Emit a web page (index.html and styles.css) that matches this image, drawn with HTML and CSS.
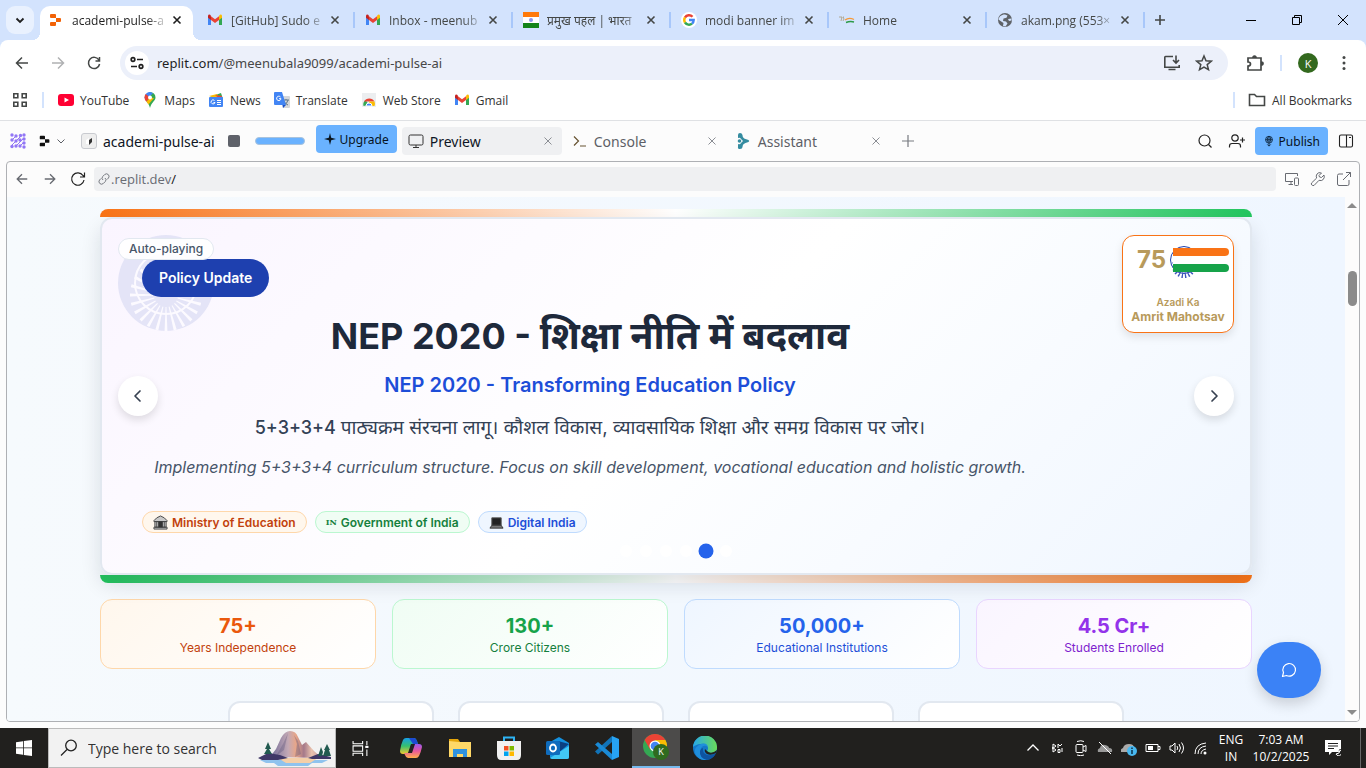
FILE: index.html
```html
<!DOCTYPE html>
<html lang="en">
<head>
<meta charset="utf-8">
<title>academi-pulse-ai</title>
<link rel="stylesheet" href="styles.css">
</head>
<body>
<svg class="defs" aria-hidden="true">
  <symbol id="x" viewBox="0 0 16 16"><path d="M4.500 4.500l7 7m0-7l-7 7" stroke="currentColor" stroke-width="1.600"/></symbol>
  <symbol id="xs" viewBox="0 0 16 16"><path d="M4.500 4.500l7 7m0-7l-7 7" stroke="currentColor" stroke-width="1"/></symbol>
  <symbol id="gmail" viewBox="0 0 16 16"><path d="M1 4v9h3V7z" fill="#4285f4"/><path d="M12 7v6h3V4z" fill="#34a853"/><path d="M12 4.500V8l3-2.300V4c0-1.500-1.500-2-2.500-1z" fill="#fbbc04"/><path d="M4 4.500V8L1 5.700V4c0-1.500 1.500-2 2.500-1z" fill="#c5221f"/><path d="M4 4.200l4 3 4-3V8l-4 3-4-3z" fill="#ea4335"/></symbol>
  <symbol id="replit" viewBox="0 0 16 16"><path d="M3 2h4q1 0 1 1v3H3q-1 0-1-1V3q0-1 1-1zM8 6h4q1 0 1 1v2q0 1-1 1H8zM3 10h5v3q0 1-1 1H3q-1 0-1-1v-2q0-1 1-1z" fill="currentColor"/></symbol>
  <symbol id="back" viewBox="0 0 16 16"><path d="M14 8H3m5-5.500L2.500 8 8 13.500" fill="none" stroke="currentColor" stroke-width="1.500"/></symbol>
  <symbol id="fwd" viewBox="0 0 16 16"><path d="M2 8h11M8 2.500L13.500 8 8 13.500" fill="none" stroke="currentColor" stroke-width="1.500"/></symbol>
  <symbol id="reload" viewBox="0 0 16 16"><path d="M13 5.200A5.600 5.600 0 1 0 13.600 9M13.500 2v4H9.500" fill="none" stroke="currentColor" stroke-width="1.500"/></symbol>
</svg>

<header class="tabstrip">
  <button class="tab-search" aria-label="Search tabs"><svg viewBox="0 0 16 16"><path d="M4.500 6.500L8 10l3.500-3.500" fill="none" stroke="#1f1f1f" stroke-width="1.800"/></svg></button>
  <nav class="tabs">
    <div class="tab active"><svg class="brand"><use href="#replit"/></svg><span>academi-pulse-a</span><button aria-label="Close"><svg><use href="#x"/></svg></button></div>
    <div class="tab"><svg><use href="#gmail"/></svg><span>[GitHub] Sudo e</span><button aria-label="Close"><svg><use href="#x"/></svg></button></div>
    <div class="tab"><svg><use href="#gmail"/></svg><span>Inbox - meenub</span><button aria-label="Close"><svg><use href="#x"/></svg></button></div>
    <div class="tab"><svg viewBox="0 0 16 16"><path fill="#ff7a0a" d="M0 0h16v5H0z"/><path fill="#fff" d="M0 5h16v6H0z"/><path fill="#14841a" d="M0 11h16v5H0z"/><circle cx="8" cy="8" r="2" fill="#8d94e8"/></svg><span>प्रमुख पहल | भारत</span><button aria-label="Close"><svg><use href="#x"/></svg></button></div>
    <div class="tab"><svg viewBox="0 0 16 16"><circle cx="8" cy="8" r="8" fill="#fff"/><g fill="none" stroke-width="2.400"><path d="M11.500 4.800A4.700 4.700 0 0 0 4 5.500" stroke="#ea4335"/><path d="M4 5.500A4.700 4.700 0 0 0 4 10.500" stroke="#fbbc04"/><path d="M4 10.500A4.700 4.700 0 0 0 11 11.600" stroke="#34a853"/><path d="M11 11.600A4.700 4.700 0 0 0 12.700 8H8" stroke="#4285f4"/></g></svg><span>modi banner im</span><button aria-label="Close"><svg><use href="#x"/></svg></button></div>
    <div class="tab"><svg viewBox="0 0 16 16" fill="none"><path d="M0 5h3L2 9m3-4H4l1 2-1 2" stroke="#a89a78" stroke-width=".8"/><path d="M6 8q4-3 9-.5" stroke="#f59a3a" stroke-width="1.300"/><path d="M7 10.500q4-1.500 8-.5" stroke="#2c9a48" stroke-width="1.500"/></svg><span>Home</span><button aria-label="Close"><svg><use href="#x"/></svg></button></div>
    <div class="tab"><svg viewBox="0 0 16 16"><circle cx="8" cy="8" r="7" fill="#5f6368"/><path d="M8 2.500l2.500 1-1 2.200-3 .8L6 9l3 .5 1.500 2-2 3L6 14l.5-3L3.500 9 1.500 7.500C2 5 4 2.500 8 2.500zM11 7l3.500-.5v2L12 9z" fill="#d3e3fd"/></svg><span>akam.png (553×</span><button aria-label="Close"><svg><use href="#x"/></svg></button></div>
  </nav>
  <button class="new-tab" aria-label="New tab"><svg viewBox="0 0 16 16"><path d="M8 3v10M3 8h10" stroke="#444746" stroke-width="1.600"/></svg></button>
  <div class="win">
    <button aria-label="Minimize"><svg viewBox="0 0 12 12"><path d="M1 6.500h10" stroke="#000"/></svg></button>
    <button aria-label="Restore"><svg viewBox="0 0 12 12" fill="none" stroke="#000"><path d="M1.500 3.500h7v7h-7zM3.500 3.500v-2h7v7h-2"/></svg></button>
    <button aria-label="Close"><svg viewBox="0 0 12 12"><path d="M1 1l10 10M11 1L1 11" stroke="#000"/></svg></button>
  </div>
</header>

<div class="chrome">
  <div class="toolbar">
    <button aria-label="Back"><svg><use href="#back"/></svg></button>
    <button aria-label="Forward" class="dim"><svg><use href="#fwd"/></svg></button>
    <button aria-label="Reload"><svg><use href="#reload"/></svg></button>
    <div class="omnibox">
      <button class="site" aria-label="Site information"><svg viewBox="0 0 16 16" fill="none" stroke="#1f1f1f" stroke-width="1.700"><circle cx="4" cy="4.500" r="1.800"/><path d="M8 4.500h6M2 11.500h6"/><circle cx="12" cy="11.500" r="1.800"/></svg></button>
      <div class="url"><b>replit.com</b>/@meenubala9099/academi-pulse-ai</div>
      <button aria-label="Install"><svg viewBox="0 0 18 18" fill="none" stroke="#444746" stroke-width="1.600"><path d="M10 2.500H2.500q-.7 0-.7.700v10h14.400V11M5.500 15.500h7M13 1.500v7M10 6l3 3 3-3"/></svg></button>
      <button aria-label="Bookmark"><svg viewBox="0 0 18 18" fill="none" stroke="#444746" stroke-width="1.500"><path d="M9 2l2 4.800 5.200.4-4 3.400 1.300 5.100L9 13l-4.500 2.700 1.300-5.100-4-3.400L7 6.800z"/></svg></button>
    </div>
    <button aria-label="Extensions" class="ext"><svg viewBox="0 0 18 18" fill="none" stroke="#444746" stroke-width="1.700"><path d="M2 4h13v12H2v-4q2.500 0 2.500-2T2 8z"/><path d="M7 4q0-2 1.500-2T10 4M15 8q2 0 2 1.500T15 11" fill="#444746"/></svg></button>
    <i class="vsep"></i>
    <button class="avatar">K</button>
    <button aria-label="Menu" class="more"><svg viewBox="0 0 16 16" fill="#444746"><circle cx="8" cy="2.500" r="1.500"/><circle cx="8" cy="8" r="1.500"/><circle cx="8" cy="13.500" r="1.500"/></svg></button>
  </div>
  <nav class="bookmarks">
    <button aria-label="Apps"><svg viewBox="0 0 16 16" fill="none" stroke="#444746" stroke-width="1.600"><path d="M1.800 1.800h4v4h-4zM10.200 1.800h4v4h-4zM1.800 10.200h4v4h-4zM10.200 10.200h4v4h-4z"/></svg></button>
    <i class="vsep first"></i>
    <a href="#"><svg viewBox="0 0 16 16"><rect y="2" width="16" height="12" rx="3" fill="#ff0033"/><path d="M6.500 5.500v5L11 8z" fill="#fff"/></svg>YouTube</a>
    <a href="#"><svg viewBox="0 0 16 16"><path d="M8 0a5.500 5.500 0 0 1 5.500 5.500C13.500 9 9.500 10 8 16c-.7-3-2-4.600-3.500-6.500z" fill="#34a853"/><path d="M3.500 8.500L11 1.200A5.500 5.500 0 0 0 3.700 2L2.500 5.500z" fill="#4285f4"/><path d="M3.700 2L8 5.500 4.500 9.800Q2.500 8 2.500 5.500T3.700 2z" fill="#ea4335"/><path d="M8 5.500L4.500 9.800l2 2.700L12 6z" fill="#fbbc04"/><circle cx="8" cy="5.500" r="2" fill="#fff"/></svg>Maps</a>
    <a href="#"><svg viewBox="0 0 16 16"><path d="M2 5L13 1l2 6z" fill="#34a853"/><path d="M1 4l8-2 2 5z" fill="#fbbc04"/><path d="M7 3l7 1-1 4z" fill="#ea4335"/><rect x="1" y="5" width="14" height="10" rx="1" fill="#4285f4"/><path d="M6.500 8.500A2 2 0 1 0 7 10.500H5.500M9 8.500h4M9 10.500h4M9 12.500h4" stroke="#fff" fill="none"/></svg>News</a>
    <a href="#"><svg viewBox="0 0 16 16"><path d="M6 4h9q1 0 1 1v10q0 1-1 1H9z" fill="#d5d7da"/><path d="M9 8h6M12 7v1m2 0q-1 4-4 5m0-4q1 3 4 4" stroke="#5f7686" fill="none"/><path d="M1 0h7l4 13H1q-1 0-1-1V1q0-1 1-1z" fill="#4285f4"/><path d="M8.500 13H12l-3 3z" fill="#1a4fc4"/><path d="M6.500 5A2.200 2.200 0 1 0 7 6.700H5" stroke="#fff" fill="none"/></svg>Translate</a>
    <a href="#"><svg viewBox="0 0 16 16"><path d="M1 1h14v14H1z" fill="#eceef0"/><path d="M2.500 14a5.700 5.700 0 0 1 2-6L8 13z" fill="#34a853"/><path d="M3 9.500a6 6 0 0 1 10.500 0z" fill="#ea4335"/><path d="M13.500 14a6 6 0 0 0 0-4.500H8V14z" fill="#fbbc04"/><path d="M5 14a3 3 0 0 1 6 0z" fill="#4285f4" stroke="#fff"/></svg>Web Store</a>
    <a href="#"><svg><use href="#gmail"/></svg>Gmail</a>
    <i class="vsep push"></i>
    <a href="#" class="all"><svg viewBox="0 0 18 16" fill="none" stroke="#444746" stroke-width="1.600"><path d="M1.500 2.500h5l2 2h8v9h-15z"/></svg>All Bookmarks</a>
  </nav>
</div>

<div class="ide">
  <div class="ide-bar">
    <svg class="dots" viewBox="0 0 16 16" fill="#9277f5" stroke="#9277f5"><path d="M2 7l4-4M2 12L11 3M6 13l7-7M10 13l3-3" stroke-width="1"/><g stroke="none"><circle cx="2" cy="2" r="1.700"/><circle cx="6" cy="3" r="1.700"/><circle cx="10.500" cy="2.500" r="1.700"/><circle cx="14" cy="2" r="1.700"/><circle cx="2" cy="7" r="1.700"/><circle cx="6" cy="8" r="1.700"/><circle cx="10" cy="7" r="1.700"/><circle cx="14" cy="6" r="1.700"/><circle cx="2" cy="13.500" r="1.700"/><circle cx="6" cy="13" r="1.700"/><circle cx="10" cy="13" r="1.700"/><circle cx="14" cy="10" r="1.700"/><circle cx="14" cy="14" r="1.700"/></g></svg>
    <button class="logo" aria-label="Replit menu"><svg><use href="#replit"/></svg><svg class="chev" viewBox="0 0 10 10"><path d="M1.500 3.500L5 7l3.500-3.500" fill="none" stroke="#5c5f66"/></svg></button>
    <div class="app"><svg viewBox="0 0 16 16"><rect x=".5" y=".5" width="15" height="15" rx="2.500" fill="#eee" stroke="#c9cbd0"/><path d="M5 7l3-2v6H5z" fill="#fff"/><path d="M8 7l3-2v4l-3 3z" fill="#333"/></svg><span>academi-pulse-ai</span></div>
    <button class="stop" aria-label="Stop"></button>
    <div class="usage"></div>
    <button class="blue upgrade"><svg viewBox="0 0 14 14"><path d="M7 0l1.400 5.600L14 7 8.400 8.400 7 14 5.600 8.400 0 7l5.600-1.400z" fill="#0a1520"/></svg>Upgrade</button>
    <nav class="panes">
      <div class="pane on"><svg viewBox="0 0 16 16" fill="none" stroke="#333"><rect x="1" y="2" width="14" height="10" rx="1.500"/><path d="M8 12v2.500M5 14.500h6"/></svg><span>Preview</span><button aria-label="Close"><svg><use href="#xs"/></svg></button></div>
      <div class="pane"><svg viewBox="0 0 16 16" fill="none" stroke="#665230" stroke-width="1.200"><path d="M2 3.500L6.500 8 2 12.500M8 13h6"/></svg><span>Console</span><button aria-label="Close"><svg><use href="#xs"/></svg></button></div>
      <div class="pane"><svg viewBox="0 0 16 16" fill="#358ca0"><path d="M2 2q0-2 2-2t2.500 2q0 3 3 4l3 1q1.500 1 0 2l-3 1q-3 1-3 4 0 2-2.500 2t-2-2v-3q2 1 3-1l2-2-2-2q-1-2-3-1z"/><circle cx="3.500" cy="8" r="1.800"/></svg><span>Assistant</span><button aria-label="Close"><svg><use href="#xs"/></svg></button></div>
    </nav>
    <button class="add" aria-label="Add pane"><svg viewBox="0 0 14 14"><path d="M7 1v12M1 7h12" stroke="#777a80" stroke-width="1.200"/></svg></button>
    <div class="ide-right">
      <button aria-label="Search"><svg viewBox="0 0 16 16" fill="none" stroke="#222" stroke-width="1.200"><circle cx="7.500" cy="7.500" r="5.500"/><path d="M11.500 11.500l3 3"/></svg></button>
      <button aria-label="Invite"><svg viewBox="0 0 18 16" fill="none" stroke="#222" stroke-width="1.200"><circle cx="7" cy="5" r="3.200"/><path d="M1.500 14.500V13q0-2.500 2.500-2.500h6q2.500 0 2.500 2.500v1.500M14.500 4.500v5M12 7h5"/></svg></button>
      <button class="blue"><svg viewBox="0 0 14 14" fill="none" stroke="#0a2238"><circle cx="7" cy="5.500" r="4"/><path d="M3 5.500h8M7 1.500v11M5 5.500q0-3 2-4 2 1 2 4l-1 3M5 5.500l1 3M5 11l2 2 2-2"/></svg>Publish</button>
      <button aria-label="Sidebar"><svg viewBox="0 0 16 16" fill="none" stroke="#222" stroke-width="1.100"><rect x="1.500" y="2" width="13" height="12" rx="1.500"/><path d="M8.500 2v12M11 4.500h2"/></svg></button>
    </div>
  </div>

  <section class="frame">
    <div class="view-bar">
      <button aria-label="Back"><svg><use href="#back"/></svg></button>
      <button aria-label="Forward"><svg><use href="#fwd"/></svg></button>
      <button aria-label="Reload" class="dark"><svg viewBox="0 0 16 16" fill="none" stroke="currentColor" stroke-width="1.200"><path d="M14 9A6.200 6.200 0 1 1 13 4.500L14.500 6M14.500 1.500V6H10"/></svg></button>
      <div class="view-url"><svg viewBox="0 0 14 14" fill="none" stroke="#777a80"><path d="M6 8q-2-1.500-.3-3.500l2-2q1.800-1.500 3.500 0t.3 3.500L10 7.500M8 6q2 1.500.3 3.500l-2 2q-1.800 1.500-3.500 0t-.3-3.500L4 6.500"/></svg><span>.replit.dev<b>/</b></span></div>
      <div class="view-right">
        <button aria-label="Devices"><svg viewBox="0 0 16 16" fill="none" stroke="currentColor"><path d="M9 10.500H1.500v-8h12V5M7 10.500v3M4.500 13.500H9"/><rect x="10.500" y="7" width="4" height="7.500" rx="1"/></svg></button>
        <button aria-label="Tools"><svg viewBox="0 0 16 16" fill="none" stroke="currentColor"><path d="M14 4l-2.500 2.500L9.500 6 9 4.500 11.500 2Q8.500.8 7 3t-.3 4L1.500 12q-.5 1.200.3 2t2.200.5l5-5.200q2.500 1 4.200-.8T14 4z"/></svg></button>
        <button aria-label="Open in new tab"><svg viewBox="0 0 16 16" fill="none" stroke="currentColor"><path d="M7 3H3Q1.500 3 1.500 4.500V13q0 1.500 1.500 1.500h8.500q1.500 0 1.500-1.500V9M10 1.500h4.500V6M14.500 1.500L7 9"/></svg></button>
      </div>
    </div>
    <div class="stage">
      <main class="page">
        <div class="wrap">
          <section class="hero">
            <div class="band top"></div>
            <div class="card">
              <svg class="chakra" viewBox="0 0 96 96"><circle cx="48" cy="48" r="48" fill="#e4e4f7"/><circle cx="48" cy="48" r="31" fill="none" stroke="#fcfaff" stroke-width="2"/><circle cx="48" cy="60" r="24" fill="none" stroke="#fcfaff" stroke-width="24" stroke-dasharray="2 4.283" stroke-dashoffset="1" pathLength="150.800"/></svg>
              <div class="body">
                <span class="kind">Policy Update</span>
                <h1>NEP 2020 - <span lang="hi">शिक्षा नीति में बदलाव</span></h1>
                <h2>NEP 2020 - Transforming Education Policy</h2>
                <p class="hi">5+3+3+4 <span lang="hi">पाठ्यक्रम संरचना लागू। कौशल विकास, व्यावसायिक शिक्षा और समग्र विकास पर जोर।</span></p>
                <p class="en">Implementing 5+3+3+4 curriculum structure. Focus on skill development, vocational education and holistic growth.</p>
                <div class="tags">
                  <span class="tag orange"><svg viewBox="0 0 16 16"><path d="M1 6l3-3 4-2 4 2 3 3v1H1zM2 7h12v6H2zM1 13h14v2H1z" fill="#c8c8c8" stroke="#444"/><path d="M4 7v6M6 7v6M10 7v6M12 7v6" stroke="#444"/><path d="M6 7h4v6H6z" fill="#333"/></svg>Ministry of Education</span>
                  <span class="tag green"><b>IN</b>Government of India</span>
                  <span class="tag sky"><svg viewBox="0 0 16 16"><path d="M3 3h10v8H3z" fill="#222" stroke="#555"/><path d="M3 11h10l2 3H1z" fill="#777" stroke="#333"/></svg>Digital India</span>
                </div>
              </div>
              <span class="auto">Auto-playing</span>
              <div class="azadi">
                <div class="mark"><span>75</span><svg viewBox="0 0 60 34"><circle cx="15" cy="16" r="13.500" fill="none" stroke="#1e40af" stroke-width="1"/><circle cx="15" cy="22" r="7.500" fill="none" stroke="#3c55bb" stroke-width="9" stroke-dasharray="1 1.500"/><path d="M4 12h56v8H4z" fill="#fff"/><path d="M4 4h52q4 0 4 4t-4 4H4z" fill="#f97316"/><path d="M4 20h52q4 0 4 4t-4 4H4z" fill="#16a34a"/></svg></div>
                <small>Azadi Ka</small>
                <strong>Amrit Mahotsav</strong>
              </div>
              <button class="arrow prev" aria-label="Previous"><svg viewBox="0 0 20 20"><path d="M12 5l-5 5 5 5" fill="none" stroke="#374151" stroke-width="1.700" stroke-linecap="round" stroke-linejoin="round"/></svg></button>
              <button class="arrow next" aria-label="Next"><svg viewBox="0 0 20 20"><path d="M8 5l5 5-5 5" fill="none" stroke="#374151" stroke-width="1.700" stroke-linecap="round" stroke-linejoin="round"/></svg></button>
              <div class="pager"><button aria-label="Slide 1"></button><button aria-label="Slide 2"></button><button aria-label="Slide 3"></button><button aria-label="Slide 4"></button><button aria-label="Slide 5" class="cur"></button><button aria-label="Slide 6"></button></div>
            </div>
            <div class="band bottom"></div>
          </section>
          <section class="stats">
            <div class="stat s1"><strong>75+</strong><span>Years Independence</span></div>
            <div class="stat s2"><strong>130+</strong><span>Crore Citizens</span></div>
            <div class="stat s3"><strong>50,000+</strong><span>Educational Institutions</span></div>
            <div class="stat s4"><strong>4.5 Cr+</strong><span>Students Enrolled</span></div>
          </section>
          <section class="tiles"><div></div><div></div><div></div><div></div></section>
        </div>
      </main>
      <div class="scroll"><i class="up"></i><i class="thumb"></i><i class="down"></i></div>
      <button class="chat" aria-label="Chat"><svg viewBox="0 0 16 16" fill="none" stroke="#fff" stroke-width="1.200"><path d="M1.500 14.500l1-4A6.300 6.300 0 1 1 5.500 13.500z" stroke-linejoin="round"/></svg></button>
    </div>
  </section>
</div>

<footer class="taskbar">
  <button class="start" aria-label="Start"><svg viewBox="0 0 16 16" fill="#fff"><path d="M0 2.200L7 1.200v6.300H0zM7.800 1.100L16 0v7.500H7.800zM0 8.300h7v6.500l-7-1zM7.800 8.300H16V16l-8.200-1.100z"/></svg></button>
  <label class="search">
    <svg class="glass" viewBox="0 0 18 18" fill="none" stroke="#222" stroke-width="1.300"><circle cx="11" cy="6.500" r="5.300"/><path d="M7 10.500l-6 6"/></svg>
    <input type="text" placeholder="Type here to search" aria-label="Type here to search">
    <svg class="scene" viewBox="0 0 74 36"><defs><linearGradient id="rock" x1="0" x2="1"><stop offset="0" stop-color="#6f6a98"/><stop offset=".35" stop-color="#c3a9b5"/><stop offset=".5" stop-color="#e8a688"/><stop offset=".65" stop-color="#a5798a"/><stop offset=".8" stop-color="#e9c2ae"/><stop offset="1" stop-color="#c49aa0"/></linearGradient></defs><path d="M2 30h68l-6 3H54l-4 3H20l-4-3H8z" fill="#8fc3ee"/><path d="M20 28h40l-8 5H28z" fill="#f4cfa8"/><path d="M12 27l6-8 5-11Q27 1 32 1q6 0 8 6l4 8 4-3 8 9 8 7z" fill="url(#rock)"/><path d="M30 3l-5 11-7 12 8-6zM36 5l3 9-2 13 6-3-3-13z" fill="#5c5479" opacity=".35"/><path d="M0 28l10-5 12 2 8 3-10 2H4zM50 28l10-4 13 3v2H54z" fill="#3f3767"/><path d="M10 12l3 7h-2l3 5H6l3-5H7zM63 17l2 5-1 4h-4zM69 14l3 6h-1l2 6h-8l2-6h-1z" fill="#225a50"/></svg>
  </label>
  <div class="apps">
    <button aria-label="Task view" class="view"><svg class="sm" viewBox="0 0 16 16" fill="none" stroke="#fff"><path d="M1 1v2.500h9V1M1 5.500h9v5H1zM1 15v-2.500h9V15M14 1v4M14 9v6"/><path d="M12.500 5.500h3v2h-3z" fill="#fff" stroke="none"/></svg></button>
    <button aria-label="Copilot"><svg viewBox="0 0 24 24"><defs><linearGradient id="c1" x1="0" y1="0" x2="0" y2="1"><stop offset="0" stop-color="#179fe8"/><stop offset=".5" stop-color="#35c06f"/><stop offset="1" stop-color="#f2ca30"/></linearGradient><linearGradient id="c2" x1="0" y1="0" x2="0" y2="1"><stop offset="0" stop-color="#9a5af0"/><stop offset=".5" stop-color="#e7579b"/><stop offset="1" stop-color="#ffb04a"/></linearGradient></defs><path d="M7 2h8q2 0 3 3l1 3h-4l-3 1-2 7q-1 2-3 2H4q-3 0-3-3Q2 8 4 4q1-2 3-2z" fill="url(#c1)"/><path d="M10 2h5q2 0 3 3l1 3h-5z" fill="#1c4bd2"/><path d="M17 22H9q-2 0-3-3l-1-2h3q3 0 4-3l2-6h6q3 0 3 3-1 5-3 9-1 2-3 2z" fill="url(#c2)"/><path d="M12 8h4l-3 9h-4z" fill="#222"/></svg></button>
    <button aria-label="File Explorer"><svg viewBox="0 0 24 24"><path d="M1 3h9l2 3h11v15H1z" fill="#e5a50a"/><path d="M1 5l10 1h12v15H1z" fill="#ffd867"/><path d="M5 13h14v8h-4v-3H9v3H5z" fill="#2f92de"/></svg></button>
    <button aria-label="Store"><svg viewBox="0 0 24 24"><path d="M7 6V1.500h10V6" fill="none" stroke="#2eb3f4" stroke-width="2"/><path d="M0 5h24v14q0 5-4 5H4q-4 0-4-5z" fill="#f1f1f1"/><path d="M7 10h4.500v4.500H7z" fill="#f25022"/><path d="M12.500 10H17v4.500h-4.500z" fill="#7fba00"/><path d="M7 15.500h4.500V20H7z" fill="#00a4ef"/><path d="M12.500 15.500H17V20h-4.500z" fill="#ffb900"/></svg></button>
    <button aria-label="Outlook"><svg viewBox="0 0 24 24"><path d="M4 6l9-5 10 6v14q0 2-2 2H6q-2 0-2-2z" fill="#1490df"/><path d="M12 5l11 3-11 9z" fill="#0c3f80"/><path d="M4 22L23 10v11q0 2-2 2H6z" fill="#42c8f5"/><rect y="5" width="14" height="14" rx="1.500" fill="#0f6cbd"/><ellipse cx="7" cy="12" rx="3" ry="3.500" fill="none" stroke="#fff" stroke-width="1.800"/></svg></button>
    <button aria-label="Visual Studio Code"><svg viewBox="0 0 24 24"><path d="M0 15.500L17 0v6L3 18.500z" fill="#1173b8"/><path d="M0 8.500L3 6l14 12v6z" fill="#1a8ad6"/><path d="M17 0l7 3v18l-7 3z" fill="#27a3f3"/></svg></button>
    <button aria-label="Chrome" class="open"><svg viewBox="0 0 26 26"><circle cx="12" cy="12" r="12" fill="#34a853"/><path d="M1.600 6a12 12 0 0 1 20.800 0H12l-5.200 9z" fill="#ea4335"/><path d="M22.400 6A12 12 0 0 1 12 24l5.200-9L12 6z" fill="#fbbc04"/><circle cx="12" cy="12" r="5.500" fill="#fff"/><circle cx="12" cy="12" r="4.300" fill="#4285f4"/><circle cx="18" cy="18" r="8" fill="#2f6b1f"/><text x="18" y="21" font-size="9" text-anchor="middle" fill="#fff" font-family="Open Sans, sans-serif">K</text></svg></button>
    <button aria-label="Edge"><svg viewBox="0 0 24 24"><defs><linearGradient id="e1"><stop offset="0" stop-color="#26a8ea"/><stop offset="1" stop-color="#6adb58"/></linearGradient></defs><circle cx="12" cy="12" r="12" fill="#1478c8"/><path d="M0 11A12 12 0 0 1 24 12c0 6-9 6-10 3 3-4-1-8-6-7-4 0-7 2-8 3z" fill="url(#e1)"/><path d="M8 12q-3 9 7 12-8 1-12-5-4-7 5-11 6-2 7 3-4-3-7 1z" fill="#1f8edc"/><path d="M10 12q-1 5 4 7 5 1 9-2-3 6-9 7-8-2-7-9 1-3 3-3z" fill="#0e53a0"/><path d="M14 15q4 4 10-1l-1 3q-5 3-9 1-3-2-2-5z" fill="#222"/></svg></button>
  </div>
  <div class="tray">
    <svg viewBox="0 0 16 16"><path d="M2.500 10.500L8 5l5.500 5.500" stroke-width="1.300"/></svg>
    <svg viewBox="0 0 16 16"><path d="M4 4v8M4 4l3 2-4 3M3 7l4 3-3 2M9 8V4l2 2 2-2M9 9.500h2v3H9zM13 8v4"/></svg>
    <svg viewBox="0 0 16 16"><rect x="3" y="4.500" width="7" height="8" rx="1"/><path d="M10 7l3-1.500v6L10 10M4 1.500q4-1.500 7 0M4 15q4 1.500 7 0"/></svg>
    <svg viewBox="0 0 16 16"><path d="M1 12q-1-3 2-4 1-4 5-3t4 3q4 0 3 4z" fill="#999" stroke="none"/><path d="M2 2l12 12"/></svg>
    <svg viewBox="0 0 16 16"><path d="M0 12q-1-3 2-4 1-4 6-4t5 4v4z" fill="#aaa" stroke="none"/><circle cx="11" cy="11" r="5" fill="#48b8f0" stroke="none"/><path d="M11 7.500V9m0 1v4" stroke="#08304a" stroke-width="1.500"/></svg>
    <svg viewBox="0 0 16 16"><path d="M1 4.500h12v7H1zM13 6.500h2v3h-2"/><path d="M3 6h5v4H3z" fill="#fff" stroke="none"/></svg>
    <svg viewBox="0 0 16 16"><path d="M1 6v4h2l3 3V3L3 6zM8 6q1.500 2 0 4M10 4q3 4 0 8M12.500 2.500q4 5.500 0 11"/></svg>
    <svg viewBox="0 0 16 16"><path d="M2 14Q2 4 13 3M5 14Q5 7 13 6M8 14Q8 10 13 9"/><circle cx="12" cy="13" r="1.500" fill="#fff" stroke="none"/></svg>
    <div class="lang">ENG<br>IN</div>
    <div class="clock">7:03 AM<br>10/2/2025</div>
    <button class="note" aria-label="Notifications"><svg viewBox="0 0 16 16"><path d="M0 0h16v9q-3 0-2 3H7l-3 3v-3H0z" fill="#fff" stroke="none"/><path d="M3 3.500h10M3 6h10M3 8.500h6" stroke="#222"/><path d="M15 10a3 3 0 1 1-4 4q4 0 4-4z" fill="#222"/></svg></button>
  </div>
</footer>
</body>
</html>
```
FILE: styles.css
```css
* { box-sizing: border-box; }
body { margin: 0; height: 100vh; overflow: hidden; display: flex; flex-direction: column; font-family: "Open Sans", "Noto Sans", sans-serif; font-size: 12px; color: #333; background: #fcfcfc; }
button { border: 0; padding: 0; background: none; font: inherit; color: inherit; display: flex; align-items: center; justify-content: center; flex: none; }
a { color: inherit; text-decoration: none; }
svg { display: block; flex: none; width: 16px; height: 16px; }
.defs { position: absolute; width: 0; height: 0; }
.vsep { width: 2px; height: 16px; background: #d3e3fd; flex: none; }

/* Browser tabs */
.tabstrip { height: 40px; flex: none; display: flex; align-items: center; background: #d3e3fd; color: #444746; }
.tab-search { width: 28px; height: 28px; margin: 0 3px 0 6px; border-radius: 9px; background: #e9f1fe; }
.tabs { display: flex; align-self: stretch; }
.tab { width: 158px; display: flex; align-items: center; padding: 0 10px 0 12px; position: relative; }
.tab span { flex: 1; min-width: 0; margin: 0 4px 0 8px; overflow: hidden; white-space: nowrap; mask-image: linear-gradient(90deg, #000 80%, transparent 105%); }
.tab:nth-child(n+3)::before, .new-tab::before { content: ""; width: 2px; height: 16px; margin: 0 10px 0 -12px; background: #a8c7fa; }
.tab.active { width: 153px; margin: 6px 2px 0 3px; padding: 0 8px 6px 8px; background: #fff; border-radius: 10px 10px 0 0; color: #1f1f1f; }
.tab.active::before, .tab.active::after { content: ""; position: absolute; bottom: 0; width: 8px; height: 8px; }
.tab.active::before { left: -8px; background: radial-gradient(circle at 0 0, transparent 8px, #fff 8px); }
.tab.active::after { right: -8px; background: radial-gradient(circle at 100% 0, transparent 8px, #fff 8px); }
.brand { color: #f26207; }
.new-tab { width: 36px; }
.new-tab::before { margin: 0 7px 0 -11px; }
.win { margin-left: auto; display: flex; }
.win button { width: 46px; height: 40px; }
.win svg { width: 12px; height: 12px; }

/* Address and bookmarks */
.chrome { flex: none; background: linear-gradient(#d3e3fd 10px, #fff 10px); border-bottom: 1px solid #dfe1e4; }
.toolbar { height: 46px; display: flex; align-items: center; background: #fff; border-radius: 8px 8px 0 0; padding: 0 14px; color: #444746; }
.toolbar > button { width: 16px; margin-right: 20px; }
.toolbar > .dim { color: #b0b1b3; }
.toolbar .omnibox { flex: 1; height: 34px; margin: 0 18px 0 -2px; padding: 0 15px 0 5px; border-radius: 17px; background: #ecf0fa; display: flex; align-items: center; gap: 14px; }
.omnibox svg { width: 18px; height: 18px; }
.omnibox .site { width: 24px; height: 24px; border-radius: 50%; background: #fff; }
.omnibox .site svg { width: 16px; height: 16px; }
.url { flex: 1; margin-left: -6px; font-family: "Noto Sans", sans-serif; font-size: 13px; color: #474747; }
.url b { font-weight: 400; color: #1f1f1f; }
.toolbar > .ext { width: 18px; margin-right: 16px; }
.ext svg { width: 18px; height: 18px; }
.toolbar > .avatar { width: 20px; height: 20px; margin: 0 18px 0 16px; border-radius: 50%; background: #33691e; color: #fff; font-size: 11px; }
.toolbar > .more { margin: 0; }
.bookmarks { height: 34px; padding: 0 14px 6px 12px; display: flex; align-items: center; gap: 13px; }
.bookmarks .first { margin: 0 1px; }
.bookmarks a { display: flex; align-items: center; gap: 6px; white-space: nowrap; }
.bookmarks .push { margin-left: auto; }
.bookmarks .all svg { width: 18px; }

/* Workspace */
.ide { flex: 1; min-height: 0; display: flex; flex-direction: column; padding: 0 6px 6px; background: #fcfcfc; }
.ide-bar { height: 40px; flex: none; display: flex; align-items: center; padding: 0 6px 0 4px; font-family: "Noto Sans", sans-serif; }
.logo { margin: 0 15px 0 12px; gap: 4px; color: #111; }
.logo svg { width: 14px; height: 14px; }
.logo .chev { width: 10px; height: 10px; }
.app { display: flex; align-items: center; gap: 6px; font-size: 14px; color: #0e1525; }
.stop { width: 12px; height: 12px; margin-left: 13px; border-radius: 2px; background: #5f626a; }
.usage { width: 50px; height: 8px; margin: 0 11px 0 15px; border-radius: 4px; background: #6ab2ff; border: 1px solid #a9c3dd; }
.blue { height: 28px; padding: 0 8px; gap: 4px; border-radius: 4px; background: #6ab2ff; color: #07121d; }
.blue svg { width: 12px; height: 12px; }
.upgrade { align-self: flex-start; margin: 4px 5px 0 0; }
.panes { display: flex; gap: 4px; font-size: 14px; }
.pane { width: 160px; height: 28px; display: flex; align-items: center; gap: 6px; padding: 0 6px; border-radius: 4px; color: #5c5f66; }
.pane span { flex: 1; }
.pane button { color: #8b8e94; }
.pane.on { background: #eff0f2; color: #0e1525; }
.add { margin-left: 11px; }
.add svg { width: 14px; height: 14px; }
.ide-right { margin-left: auto; display: flex; align-items: center; gap: 10px; }
.ide-right > button:nth-child(2) { margin: 0 -1px 0 5px; }
.ide-right > button:nth-child(2) svg { width: 18px; }
.frame { flex: 1; min-height: 0; display: flex; flex-direction: column; border: 1px solid #aeb0b4; border-radius: 4px; overflow: hidden; }
.view-bar { height: 35px; flex: none; display: flex; align-items: center; padding: 0 7px 1px; gap: 12px; color: #686b72; }
.view-bar > button svg { width: 14px; height: 14px; }
.view-bar > button { width: 16px; }
.view-bar .dark { color: #222; }
.view-bar .dark svg { width: 16px; height: 16px; }
.view-url { flex: 1; height: 24px; margin: 0 -4px; padding-left: 3px; display: flex; align-items: center; background: #eff0f2; border-radius: 4px; font-size: 13px; }
.view-url svg { width: 14px; height: 14px; }
.view-url b { font-weight: 400; color: #111; }
.view-right { display: flex; gap: 10px; }
.stage { flex: 1; min-height: 0; display: flex; position: relative; }
.scroll { width: 14px; flex: none; display: flex; flex-direction: column; align-items: center; padding: 6px 0; background: #fcfcfc; }
.scroll .up { border: 5px solid transparent; border-top: 0; border-bottom-color: #8b8b8b; }
.scroll .down { border: 5px solid transparent; border-bottom: 0; border-top-color: #8b8b8b; margin-top: auto; }
.thumb { width: 9px; height: 35px; margin-top: 63px; border-radius: 5px; background: #8b8b8b; }

/* Site content */
.page { flex: 1; min-width: 0; overflow: hidden; padding: 12px 93px 0; font-family: Inter, "Noto Sans Devanagari", "Noto Sans", sans-serif; background: linear-gradient(90deg, #f6fafd, #eff6ff); }
.band { height: 8px; }
.band.top { border-radius: 8px 8px 0 0; background: linear-gradient(90deg, #f97316, #fff, #22c55e); }
.band.bottom { border-radius: 0 0 8px 8px; background: linear-gradient(90deg, #22c55e, #fff, #f97316); }
.card { position: relative; border: 2px solid #e2e8f0; border-radius: 12px; padding: 40px; background: linear-gradient(135deg, #faf5ff, #fff 50%, #eff6ff); box-shadow: 0 10px 20px rgba(15, 23, 42, .12); }
.chakra { position: absolute; left: 16px; top: 16px; width: 96px; height: 96px; }
.body { position: relative; max-width: 896px; text-align: center; display: flex; flex-direction: column; }
.kind { align-self: flex-start; padding: 9px 17px; line-height: 20px; border-radius: 19px; background: #1e40af; color: #fff; font-size: 14px; font-weight: 600; }
h1, h2, p { margin: 0; }
h1 { margin-top: 16px; font-size: 36px; line-height: 46px; font-weight: 700; color: #1e293b; }
h1 span { font-size: 38px; line-height: 1; }
h2 { margin-top: 12px; font-size: 20px; line-height: 28px; font-weight: 600; color: #1d4ed8; }
.hi { margin-top: 12px; font-size: 18px; line-height: 34px; font-weight: 500; color: #334155; }
.hi span { font-size: 19px; line-height: 1; font-weight: 400; }
.en { margin-top: 10px; font-size: 16px; line-height: 24px; font-style: italic; color: #475569; }
.tags { margin-top: 32px; display: flex; gap: 8px; font-size: 12px; font-weight: 600; }
.tag { display: flex; align-items: center; gap: 4px; height: 22px; padding: 0 10px; border-radius: 11px; border: 1px solid; white-space: nowrap; }
.tag svg { width: 15px; height: 15px; }
.tag b { font-family: "DejaVu Serif", serif; font-size: 8px; }
.orange { background: #fff7ed; border-color: #fed7aa; color: #c2410c; }
.green { background: #f0fdf4; border-color: #bbf7d0; color: #15803d; }
.sky { background: #eff6ff; border-color: #bfdbfe; color: #1d4ed8; }
.auto { position: absolute; left: 16px; top: 19px; padding: 0 10px; line-height: 20px; border: 1px solid #e2e8f0; border-radius: 11px; background: rgba(255, 255, 255, .9); font-size: 12px; font-weight: 500; color: #475569; }
.azadi { position: absolute; right: 16px; top: 16px; width: 112px; height: 98px; padding: 8px 4px; border: 1px solid #f97316; border-radius: 12px; background: #fff; color: #b89a5b; text-align: center; box-shadow: 0 4px 8px rgba(0, 0, 0, .1); display: flex; flex-direction: column; }
.mark { flex: 1; display: flex; justify-content: flex-end; gap: 3px; }
.mark span { font-size: 24px; line-height: 32px; font-weight: 700; }
.mark svg { width: 60px; height: 34px; }
.azadi small { font-size: 10px; line-height: 14px; font-weight: 600; }
.azadi strong { font-size: 12px; line-height: 15px; white-space: nowrap; }
.arrow { position: absolute; top: 157px; width: 40px; height: 40px; border-radius: 50%; background: #fff; box-shadow: 0 4px 8px rgba(0, 0, 0, .12); }
.arrow svg { width: 20px; height: 20px; }
.prev { left: 16px; }
.next { right: 16px; }
.pager { position: absolute; left: 0; right: 0; bottom: 16px; display: flex; justify-content: center; gap: 8px; }
.pager button { width: 12px; height: 12px; border-radius: 50%; background: #fff; }
.pager .cur { background: #2563eb; transform: scale(1.25); }
.stats { margin-top: 16px; display: grid; grid-template-columns: repeat(4, 1fr); gap: 16px; }
.stat { height: 70px; padding-top: 12px; border: 1px solid; border-radius: 12px; text-align: center; display: flex; flex-direction: column; }
.stat strong { font-size: 20px; line-height: 28px; }
.stat span { font-size: 12px; line-height: 16px; }
.s1 { border-color: #fed7aa; background: linear-gradient(135deg, #fff7ed, #fff); color: #ea580c; }
.s2 { border-color: #bbf7d0; background: linear-gradient(135deg, #f0fdf4, #fff); color: #16a34a; }
.s3 { border-color: #bfdbfe; background: linear-gradient(135deg, #eff6ff, #fff); color: #2563eb; }
.s4 { border-color: #e9d5ff; background: linear-gradient(135deg, #faf5ff, #fff); color: #9333ea; }
.s1 span { color: #c2410c; } .s2 span { color: #15803d; } .s3 span { color: #1d4ed8; } .s4 span { color: #7e22ce; }
.tiles { max-width: 896px; margin: 32px auto 0; display: grid; grid-template-columns: repeat(4, 1fr); gap: 24px; }
.tiles div { height: 100px; background: #fff; border: 2px solid #e2e8f0; border-radius: 12px; }
.chat { position: absolute; right: 38px; bottom: 23px; width: 64px; height: 56px; border-radius: 28px; background: #3b82f6; box-shadow: 0 6px 14px rgba(0, 0, 0, .16); }

/* Taskbar */
.taskbar { height: 40px; flex: none; display: flex; background: #21201e; color: #fff; }
.start { width: 48px; }
.search { width: 288px; display: flex; align-items: center; padding: 0 3px 0 11px; background: #f2f2f2; border: 1px solid #bbb; }
.glass { width: 18px; height: 18px; }
.search input { flex: 1; min-width: 0; margin-left: 10px; padding: 0; border: 0; background: none; font: 14px "Open Sans", sans-serif; color: #333; }
.search input::placeholder { color: #333; opacity: 1; }
.scene { width: 74px; height: 36px; }
.apps { display: flex; gap: 1px; }
.apps button { width: 48px; }
.apps .view { width: 50px; padding-right: 2px; }
.apps svg { width: 24px; height: 24px; }
.apps .sm { width: 17px; height: 17px; }
.apps .open { background: #4c4b4a; border-bottom: 2px solid #76b9ed; }
.apps .open svg { width: 26px; height: 26px; }
.tray { margin-left: auto; display: flex; align-items: center; text-align: center; line-height: 17px; padding-right: 5px; }
.tray svg { width: 16px; height: 16px; margin: 0 4px; fill: none; stroke: #fff; }
.lang { width: 36px; }
.clock { width: 64px; }
.note { width: 48px; height: 40px; padding-right: 8px; border-right: 1px solid #666; }
```
